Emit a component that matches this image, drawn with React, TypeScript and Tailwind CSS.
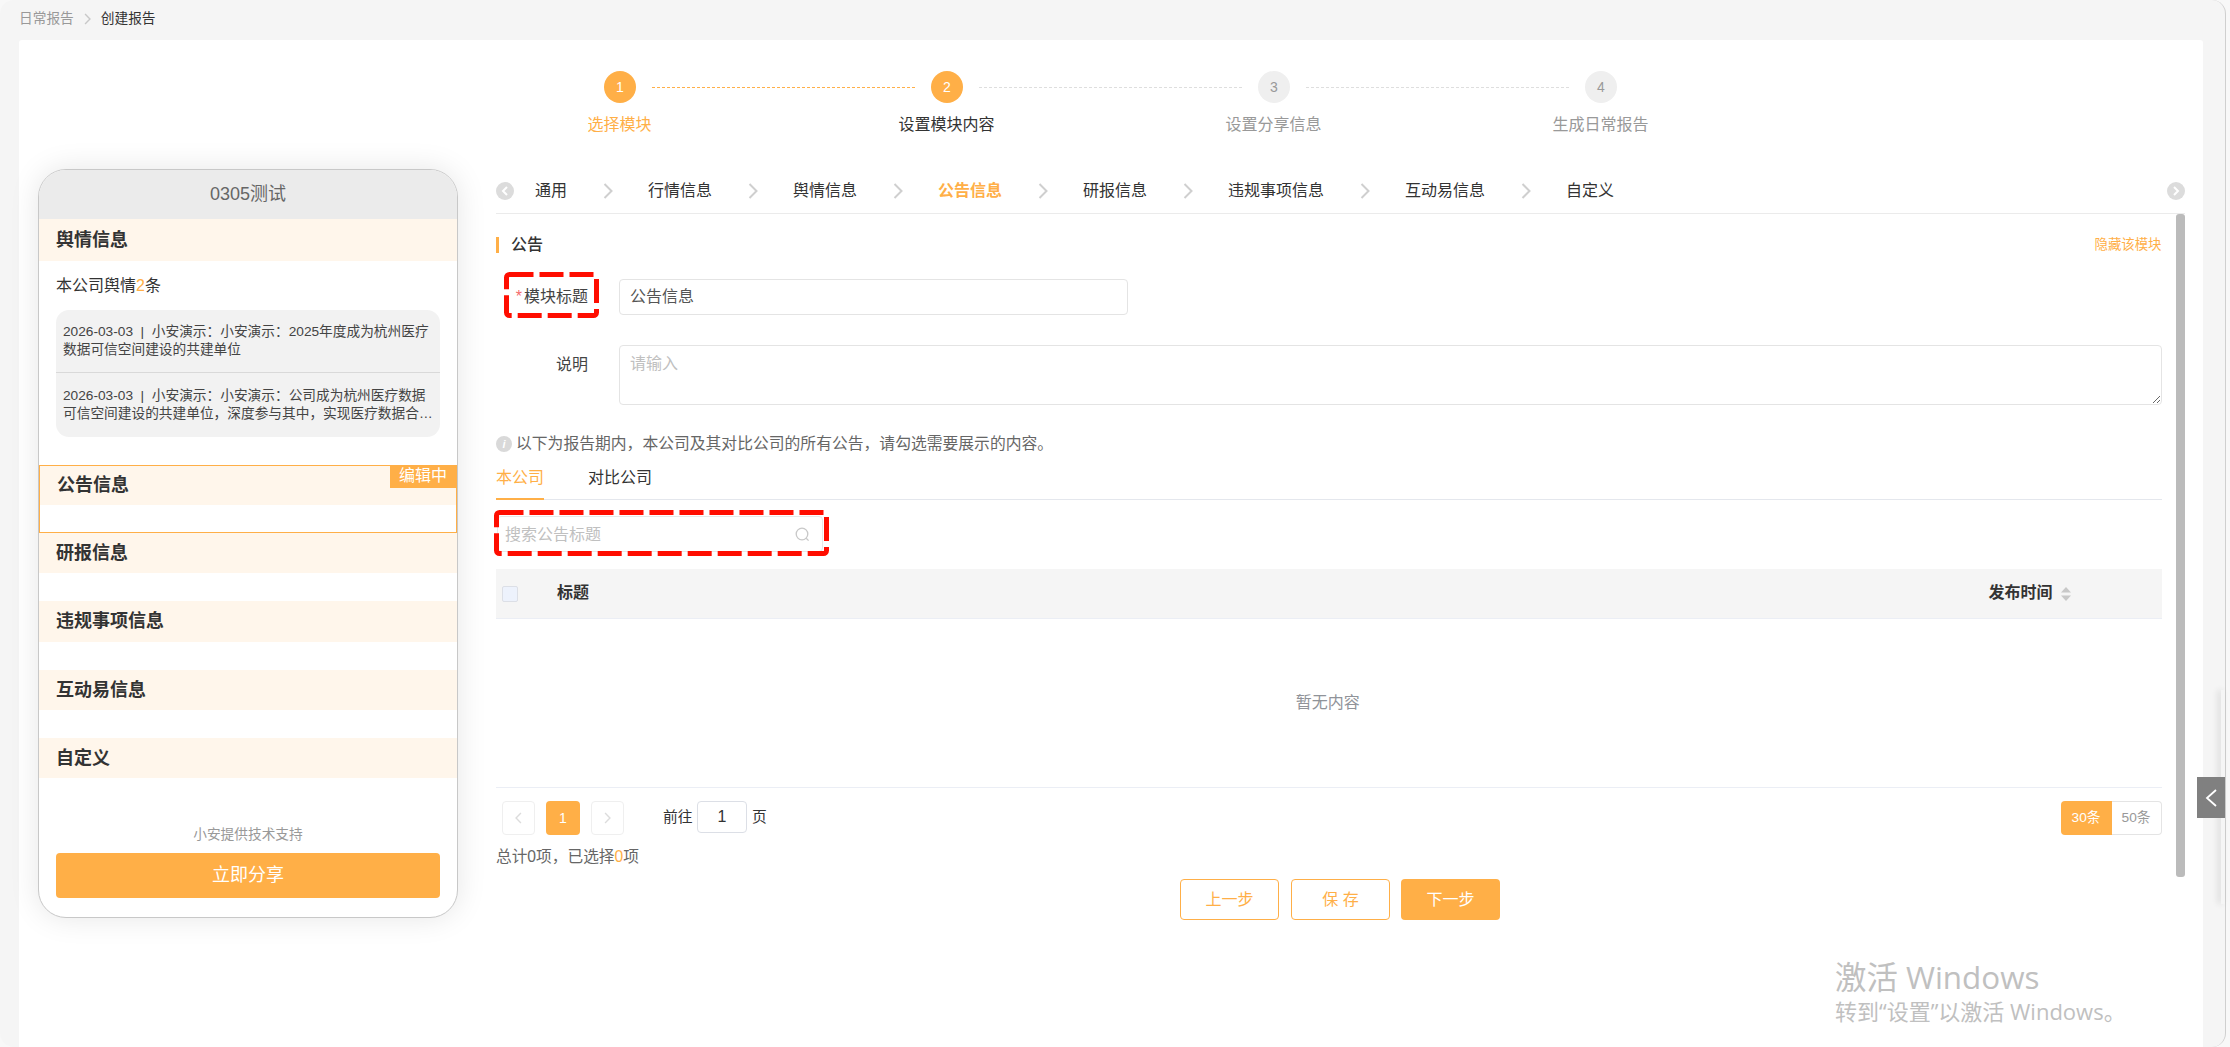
import React from "react";

const Chevron = ({ dir = "right", className = "" }: { dir?: "right" | "left"; className?: string }) => (
  <svg width="10" height="16" viewBox="0 0 10 16" fill="none" className={className}>
    <polyline
      points={dir === "right" ? "1.5,1 8.5,8 1.5,15" : "8.5,1 1.5,8 8.5,15"}
      stroke="currentColor"
      strokeWidth="2"
    />
  </svg>
);

const RoundArrow = ({ dir }: { dir: "left" | "right" }) => (
  <div className="w-[18px] h-[18px] rounded-full bg-[#dcdcdc] flex items-center justify-center text-white shrink-0">
    <svg width="8" height="10" viewBox="0 0 8 10" fill="none">
      <polyline points={dir === "right" ? "2,1 6,5 2,9" : "6,1 2,5 6,9"} stroke="currentColor" strokeWidth="2" />
    </svg>
  </div>
);

const DashBox = ({ w, h, className }: { w: number; h: number; className: string }) => (
  <svg width={w} height={h} viewBox={`0 0 ${w} ${h}`} fill="none" className={`absolute pointer-events-none ${className}`}>
    <rect x="2.5" y="2.5" width={w - 5} height={h - 5} rx="3" stroke="#ff0d00" strokeWidth="5" strokeDasharray="24 6" />
  </svg>
);

const Step = ({ n, active }: { n: number; active: boolean }) => (
  <div
    className={`w-8 h-8 rounded-full flex items-center justify-center text-[14px] shrink-0 ${
      active ? "bg-[#ffaf47] text-white" : "bg-[#efefef] text-[#999]"
    }`}
  >
    {n}
  </div>
);

const tabs = ["通用", "行情信息", "舆情信息", "公告信息", "研报信息", "违规事项信息", "互动易信息", "自定义"];

const SectionHead = ({ children, className = "h-[41px]" }: { children: React.ReactNode; className?: string }) => (
  <div className={`bg-[#fff6eb] flex items-center pl-[17px] text-[18px] font-bold text-[#333] ${className}`}>{children}</div>
);

export default function App() {
  return (
    <div className="relative w-[2230px] h-[1047px] overflow-hidden bg-[#f8f8f8] font-['Liberation_Sans','Noto_Sans_CJK_SC',sans-serif] text-[16px] text-[#333]">
      <div className="w-[2226px] h-full bg-[#f5f5f5] rounded-[14px] border-r border-[#cfcfcf] pl-[19px] pr-[22px] flex flex-col">
        {/* breadcrumb */}
        <div className="h-[40px] shrink-0 flex items-center text-[13.7px] pb-[2px]">
          <span className="text-[#999]">日常报告</span>
          <Chevron className="text-[#c8c8c8] w-[7px] h-[12px] mx-[10px]" />
          <span className="text-[#333]">创建报告</span>
        </div>

        {/* card */}
        <div className="flex-1 bg-white rounded-t-[3px] flex flex-col">
          {/* steps */}
          <div className="pt-[31px] h-[129px] shrink-0 flex flex-col items-center">
            <div className="flex items-center w-[1308px] pl-[147px]">
              <Step n={1} active />
              <div className="ml-4 mr-[15px] w-[264px] h-px bg-[repeating-linear-gradient(90deg,#ffaf47_0,#ffaf47_3px,transparent_3px,transparent_5px)]" />
              <Step n={2} active />
              <div className="ml-4 mr-[15px] w-[264px] h-px bg-[repeating-linear-gradient(90deg,#dedede_0,#dedede_3px,transparent_3px,transparent_5px)]" />
              <Step n={3} active={false} />
              <div className="ml-4 mr-[15px] w-[264px] h-px bg-[repeating-linear-gradient(90deg,#dedede_0,#dedede_3px,transparent_3px,transparent_5px)]" />
              <Step n={4} active={false} />
            </div>
            <div className="grid grid-cols-[repeat(4,327px)] mt-[10px] text-center leading-[24px] pr-[2px]">
              <span className="text-[#ffaf47]">选择模块</span>
              <span className="text-[#333]">设置模块内容</span>
              <span className="text-[#999]">设置分享信息</span>
              <span className="text-[#999]">生成日常报告</span>
            </div>
          </div>

          <div className="flex pl-[19px]">
            {/* phone */}
            <div className="w-[420px] h-[749px] shrink-0 rounded-[28px] border border-[#c8c8c8] bg-white shadow-[0_0_30px_rgba(0,0,0,0.1)] overflow-hidden flex flex-col">
              <div className="h-[49px] shrink-0 bg-[#ebebeb] flex items-center justify-center text-[18px] text-[#666]">0305测试</div>
              <SectionHead className="h-[42px]">舆情信息</SectionHead>
              <div className="pl-[17px] pt-[13px] leading-[24px]">
                本公司舆情<span className="text-[#ffaf47]">2</span>条
              </div>
              <div className="mx-[17px] mt-[12px] h-[127px] rounded-[13px] bg-[#f2f2f2] text-[13.7px] leading-[18px] text-[#444]">
                <div className="h-[63px] px-[7px] pt-[13px] border-b border-[#d9d9d9]">
                  2026-03-03 &nbsp;|&nbsp; 小安演示：小安演示：2025年度成为杭州医疗数据可信空间建设的共建单位
                </div>
                <div className="h-[64px] px-[7px] pt-[14px]">
                  <div className="line-clamp-2">
                    2026-03-03 &nbsp;|&nbsp; 小安演示：小安演示：公司成为杭州医疗数据可信空间建设的共建单位，深度参与其中，实现医疗数据合规流通与价值释放的新模式探索
                  </div>
                </div>
              </div>

              <div className="relative mt-[28px] h-[68px] border border-[#ffaf47] shrink-0">
                <SectionHead className="h-[39px] pl-[16px]">公告信息</SectionHead>
                <div className="absolute right-0 top-0 w-[66px] h-[22px] bg-[#ffaf47] text-white text-[16px] leading-[20px] text-center">编辑中</div>
              </div>
              <SectionHead className="h-[40px]">研报信息</SectionHead>
              <div className="h-[28px] shrink-0" />
              <SectionHead>违规事项信息</SectionHead>
              <div className="h-[28px] shrink-0" />
              <SectionHead className="h-[40px]">互动易信息</SectionHead>
              <div className="h-[28px] shrink-0" />
              <SectionHead className="h-[40px]">自定义</SectionHead>

              <div className="mt-[47px] text-center text-[13.7px] leading-[20px] text-[#999]">小安提供技术支持</div>
              <div className="mx-[17px] mt-[8px] h-[45px] rounded-[4px] bg-[#ffaf47] text-white text-[18px] flex items-center justify-center">立即分享</div>
            </div>

            {/* right */}
            <div className="ml-[38px] w-[1689px] flex flex-col">
              <div className="h-[45px] border-b border-[#ebebeb] flex items-center justify-between">
                <RoundArrow dir="left" />
                <div className="flex-1 flex items-center pl-[21px]">
                  {tabs.map((t, i) => (
                    <React.Fragment key={t}>
                      <span className={`whitespace-nowrap ${t === "公告信息" ? "text-[#ffaf47] font-bold" : "text-[#333]"}`}>{t}</span>
                      {i < tabs.length - 1 && <Chevron className="text-[#cfcfcf] mx-[35.5px] shrink-0" />}
                    </React.Fragment>
                  ))}
                </div>
                <RoundArrow dir="right" />
              </div>

              <div className="flex h-[663px]">
                <div className="w-[1665.5px] shrink-0">
                  {/* heading */}
                  <div className="mt-[23px] h-4 flex items-center justify-between">
                    <div className="flex items-center border-l-[3px] border-[#ffaf47] h-4 pl-3 font-medium text-[#333]">公告</div>
                    <span className="text-[#ffaf47] text-[13.4px]">隐藏该模块</span>
                  </div>

                  {/* title */}
                  <div className="relative mt-[26px] h-9 flex items-center">
                    <DashBox w={95} h={46} className="left-[8px] top-[-7px]" />
                    <label className="w-[92px] text-right text-[#444]">
                      <span className="text-[#f56c6c] mr-[2px]">*</span>模块标题
                    </label>
                    <div className="ml-[31px] w-[509px] h-9 border border-[#e4e4e4] rounded-[4px] flex items-center pl-[10px] text-[#555]">公告信息</div>
                  </div>

                  {/* desc */}
                  <div className="mt-[30px] flex items-start">
                    <label className="w-[92px] text-right text-[#444] leading-[40px]">说明</label>
                    <textarea
                      placeholder="请输入"
                      className="ml-[31px] w-[1542.5px] h-[60px] border border-[#e4e4e4] rounded-[4px] px-[10px] py-[6px] text-[16px] leading-[24px] resize placeholder:text-[#c0c0c0] outline-none font-['Liberation_Sans','Noto_Sans_CJK_SC',sans-serif]"
                    />
                  </div>

                  {/* info */}
                  <div className="mt-[27px] h-6 flex items-center text-[#666] text-[15.8px]">
                    <div className="w-4 h-4 rounded-full bg-[#d9d9d9] text-white text-[11px] font-bold italic flex items-center justify-center mr-[4px]">i</div>
                    以下为报告期内，本公司及其对比公司的所有公告，请勾选需要展示的内容。
                  </div>

                  {/* subtabs */}
                  <div className="h-[44px] border-b border-[#e4e7ed] flex">
                    <div className="h-[44px] border-b-2 border-[#ffaf47] text-[#ffaf47] flex items-center pt-[2px]">本公司</div>
                    <div className="h-[44px] ml-[44px] flex items-center border-b-2 border-transparent text-[#333] pt-[2px]">对比公司</div>
                  </div>

                  {/* search */}
                  <div className="relative mt-4 ml-px w-[326px] h-9 border border-[#e8e8e8] rounded-[4px] flex items-center justify-between pl-[7px] pr-[12px] text-[#c0c0c0]">
                    <DashBox w={335} h={46} className="left-[-4px] top-[-7px]" />
                    <span className="pt-[1px]">搜索公告标题</span>
                    <svg width="15" height="15" viewBox="0 0 15 15" fill="none">
                      <circle cx="7" cy="7" r="5.8" stroke="#c8c8c8" strokeWidth="1.3" />
                      <line x1="11.2" y1="11.2" x2="13.6" y2="13.6" stroke="#c8c8c8" strokeWidth="1.3" />
                    </svg>
                  </div>

                  {/* table */}
                  <div className="mt-[17px] h-[50px] bg-[#f5f5f5] border-b border-[#ebeef5] flex items-center font-bold text-[#333]">
                    <div className="ml-[6px] w-4 h-4 rounded-[2px] bg-[#edf2fc] border border-[#dcdfe6]" />
                    <span className="ml-[39px] flex-1 pb-[1px]">标题</span>
                    <span className="pb-[1px]">发布时间</span>
                    <svg width="12" height="16" viewBox="0 0 12 16" className="ml-[7px] mr-[90px]">
                      <polygon points="6,1 11,6.5 1,6.5" fill="#c8c8c8" />
                      <polygon points="6,15 11,9.5 1,9.5" fill="#c8c8c8" />
                    </svg>
                  </div>
                  <div className="h-[169px] border-b border-[#ebeef5] flex items-center justify-center text-[#909399] pl-[-2px] pr-[2px]">暂无内容</div>

                  {/* pagination */}
                  <div className="mt-[13px] flex items-start justify-between">
                    <div className="flex items-start ml-[6px]">
                      <div className="w-[33px] h-[34px] border border-[#efefef] rounded-[4px] flex items-center justify-center text-[#dcdcdc]">
                        <Chevron dir="left" className="w-[7px] h-[12px]" />
                      </div>
                      <div className="ml-[11px] w-[34px] h-[34px] bg-[#ffaf47] rounded-[4px] text-white text-[14px] flex items-center justify-center">1</div>
                      <div className="ml-[11px] w-[33px] h-[34px] border border-[#efefef] rounded-[4px] flex items-center justify-center text-[#dcdcdc]">
                        <Chevron className="w-[7px] h-[12px]" />
                      </div>
                      <span className="ml-[39px] w-[34px] text-[14.8px] leading-[32px]">前往</span>
                      <div className="w-[50px] h-8 border border-[#dcdfe6] rounded-[4px] flex items-center justify-center">1</div>
                      <span className="ml-[5px] text-[14.8px] leading-[32px]">页</span>
                    </div>
                    <div className="flex h-[34px] text-[13.7px]">
                      <div className="w-[51px] bg-[#ffaf47] text-white rounded-l-[4px] flex items-center justify-center">30条</div>
                      <div className="w-[50px] border border-l-0 border-[#e4e4e4] text-[#999] rounded-r-[4px] flex items-center justify-center">50条</div>
                    </div>
                  </div>
                  <div className="mt-[10px] leading-[24px] text-[15.7px] text-[#666]">
                    总计0项，已选择<span className="text-[#ffaf47]">0</span>项
                  </div>
                </div>

                {/* scrollbar */}
                <div className="ml-[14.5px] w-[9px] h-[663px] rounded-[3px] bg-[#bbbbbb]" />
              </div>

              <div className="mt-[2px] flex pl-[684px]">
                <div className="w-[99px] h-[41px] border border-[#ffaf47] rounded-[4px] text-[#ffaf47] flex items-center justify-center">上一步</div>
                <div className="ml-[12px] w-[99px] h-[41px] border border-[#ffaf47] rounded-[4px] text-[#ffaf47] flex items-center justify-center">保 存</div>
                <div className="ml-[11px] w-[99px] h-[41px] bg-[#ffaf47] rounded-[4px] text-white flex items-center justify-center">下一步</div>
              </div>
            </div>
          </div>
        </div>
      </div>

      {/* side toggle */}
      <div className="absolute left-[2221px] top-[690px] w-[4px] h-[214px] shadow-[-3px_0_6px_rgba(0,0,0,0.12)]" />
      <div className="absolute left-[2197px] top-[777px] w-[28px] h-[41px] bg-[#808080] flex items-center justify-center text-white">
        <svg width="13" height="18" viewBox="0 0 13 18" fill="none">
          <polyline points="11,1 2,9 11,17" stroke="currentColor" strokeWidth="1.8" />
        </svg>
      </div>

      {/* activation watermark */}
      <div className="absolute left-[1835px] top-[955px] text-[#c0c0c0] font-['Open_Sans','Noto_Sans_CJK_SC',sans-serif] pointer-events-none">
        <div className="text-[31.4px] leading-[44px]">激活 Windows</div>
        <div className="text-[22px] leading-[30px] mt-[-3px]">转到“设置”以激活 Windows。</div>
      </div>
    </div>
  );
}
